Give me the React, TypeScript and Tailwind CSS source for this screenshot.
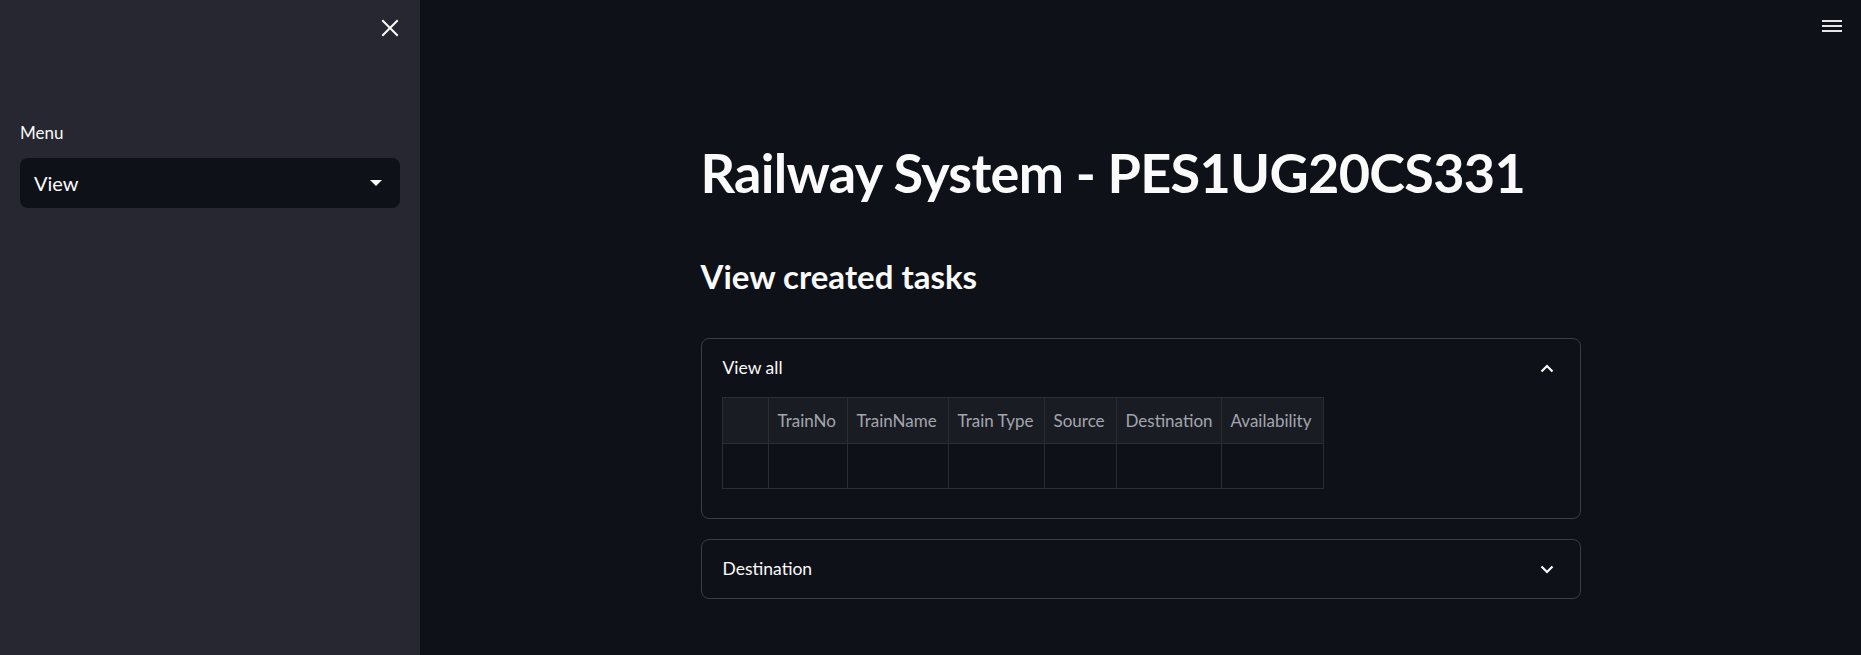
import { ReactNode } from 'react';

const FONT = 'font-["Lato","Noto_Sans",sans-serif]';

const COLUMNS = [
  { label: '', width: 46 },
  { label: 'TrainNo', width: 79 },
  { label: 'TrainName', width: 101 },
  { label: 'Train Type', width: 96 },
  { label: 'Source', width: 72 },
  { label: 'Destination', width: 105 },
  { label: 'Availability', width: 101 },
];

function CloseIcon() {
  return (
    <svg width="18" height="18" viewBox="0 0 18 18" fill="none">
      <path d="M2 2L16 16M16 2L2 16" stroke="#fafafa" strokeWidth="2" strokeLinecap="square" />
    </svg>
  );
}

function MenuIcon() {
  return (
    <svg width="20" height="14" viewBox="0 0 20 14" fill="none">
      <path d="M0 2H20M0 7H20M0 12H20" stroke="#e6e6e6" strokeWidth="2.2" />
    </svg>
  );
}

function Caret() {
  return (
    <svg width="12" height="7" viewBox="0 0 12 7">
      <path d="M0 0H12L6 6Z" fill="#fafafa" />
    </svg>
  );
}

function Chevron({ up }: { up: boolean }) {
  return (
    <svg width="14" height="9" viewBox="0 0 14 9" fill="none">
      <path
        d={up ? 'M1.5 7.5L7 2L12.5 7.5' : 'M1.5 1.5L7 7L12.5 1.5'}
        stroke="#fafafa"
        strokeWidth="2.2"
      />
    </svg>
  );
}

function Expander({ title, open, children }: { title: string; open: boolean; children?: ReactNode }) {
  return (
    <div className="rounded-[8px] border border-[#3b3e44]">
      <div className="flex h-[58px] items-center justify-between pl-[21px] pr-[26px]">
        <span className="text-[17.5px] text-[#fafafa]">{title}</span>
        <Chevron up={open} />
      </div>
      {open && <div className="px-[20px] pb-[29px]">{children}</div>}
    </div>
  );
}

function EmptyTable() {
  return (
    <div className="inline-flex flex-col border border-[#2b2d33]">
      <div className="flex h-[46px] bg-[#1a1c23]">
        {COLUMNS.map((c, i) => (
          <div
            key={i}
            style={{ width: c.width }}
            className="flex items-center border-r border-b border-[#2b2d33] pl-[9px] text-[17px] text-[#a3a6ae] last:border-r-0"
          >
            {c.label}
          </div>
        ))}
      </div>
      <div className="flex h-[44px] bg-[#0e1117]">
        {COLUMNS.map((c, i) => (
          <div key={i} style={{ width: c.width }} className="border-r border-[#2b2d33] last:border-r-0" />
        ))}
      </div>
    </div>
  );
}

export default function App() {
  return (
    <div className={`flex h-[655px] w-full overflow-hidden bg-[#0e1117] ${FONT}`}>
      {/* Sidebar */}
      <aside className="relative w-[420px] shrink-0 bg-[#262730] px-[20px] pt-[122px]">
        <button className="absolute right-[21px] top-[19px]">
          <CloseIcon />
        </button>
        <div className="mb-[14px] text-[17px] leading-[22px] text-[#fafafa]">Menu</div>
        <div className="flex h-[50px] items-center justify-between rounded-[8px] bg-[#0e1117] pl-[14px] pr-[18px]">
          <span className="text-[20px] text-[#fafafa]">View</span>
          <Caret />
        </div>
      </aside>

      {/* Main */}
      <main className="relative flex-1">
        <button className="absolute right-[19px] top-[19px]">
          <MenuIcon />
        </button>
        <div className="mx-auto w-[880px] pt-[139px]">
          <h1 className="text-[54px] font-bold leading-[68px] tracking-[-0.7px] text-[#fafafa]">
            Railway System - PES1UG20CS331
          </h1>
          <h2 className="mt-[48px] text-[33px] font-bold leading-[42px] text-[#fafafa]">
            View created tasks
          </h2>
          <div className="mt-[41px] flex flex-col gap-[20px]">
            <Expander title="View all" open>
              <EmptyTable />
            </Expander>
            <Expander title="Destination" open={false} />
          </div>
        </div>
      </main>
    </div>
  );
}
